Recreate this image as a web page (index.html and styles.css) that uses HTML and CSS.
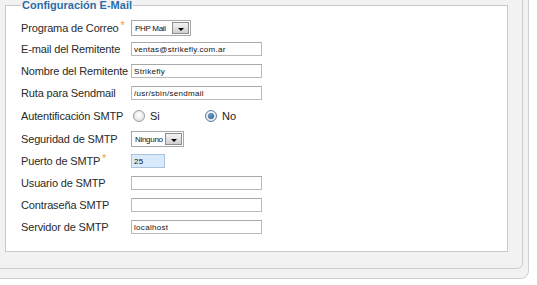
FILE: index.html
```html
<!DOCTYPE html>
<html lang="es">
<head>
  <meta charset="UTF-8" />
  <title>Configuración E-Mail</title>
  <link rel="stylesheet" href="styles.css">
</head>
<body>

<div class="marco">
  <div class="marco-in">
    <fieldset class="config">
      <legend>Configuración E-Mail</legend>

      <div class="fila primera">
        <label>Programa de Correo <span class="req">*</span></label>
        <div class="combo ancho-php">
          <span class="combo-txt">PHP Mail</span>
          <span class="combo-btn"><i></i></span>
        </div>
      </div>

      <div class="fila">
        <label>E-mail del Remitente</label>
        <input type="text" value="ventas@strikefly.com.ar">
      </div>

      <div class="fila">
        <label>Nombre del Remitente</label>
        <input type="text" value="Strikefly">
      </div>

      <div class="fila">
        <label>Ruta para Sendmail</label>
        <input type="text" value="/usr/sbin/sendmail">
      </div>

      <div class="fila radios">
        <label>Autentificación SMTP</label>
        <span class="opcion si"><span class="radio"></span>Si</span>
        <span class="opcion"><span class="radio activo"></span>No</span>
      </div>

      <div class="fila">
        <label>Seguridad de SMTP</label>
        <div class="combo ancho-ninguno">
          <span class="combo-txt">Ninguno</span>
          <span class="combo-btn"><i></i></span>
        </div>
      </div>

      <div class="fila">
        <label>Puerto de SMTP <span class="req">*</span></label>
        <input type="text" class="corto foco" value="25">
      </div>

      <div class="fila">
        <label>Usuario de SMTP</label>
        <input type="text" value="">
      </div>

      <div class="fila">
        <label>Contraseña SMTP</label>
        <input type="password" value="">
      </div>

      <div class="fila">
        <label>Servidor de SMTP</label>
        <input type="text" value="localhost">
      </div>
    </fieldset>
  </div>
</div>

</body>
</html>
```

FILE: styles.css
```css
* {
  box-sizing: border-box;
}
body {
  margin: 0;
  background: #fff;
  font-family: 'Liberation Sans', Arial, sans-serif;
  color: #222;
  overflow: hidden;
}
.marco {
  margin: -10px 0 0 -10px;
  width: 539px;
  background: #f2f2f2;
  border: 1px solid #cfcfcf;
  border-radius: 0 0 8px 0;
  padding: 0 5px 9px 0;
}
.marco-in {
  border: 1px solid #cdcdcd;
  border-radius: 0 0 6px 0;
  padding: 7px 14px 16px 13px;
}
.config {
  margin: 0;
  background: #fff;
  border: 1px solid #c9c9c9;
  padding: 7px 10px 13px 15px;
}
.config legend {
  padding: 0 1px;
  font-size: 11px;
  line-height: 12px;
  font-weight: bold;
  color: #2a6ca8;
}
.fila {
  display: flex;
  align-items: center;
  height: 22px;
}
.fila.primera {
  height: 20px;
}
.fila.radios {
  height: 24px;
}
.fila label {
  width: 110px;
  flex-shrink: 0;
  font-size: 11px;
  letter-spacing: -0.15px;
  color: #2a2a2a;
  white-space: nowrap;
}
.req {
  color: #f0a23a;
  font-size: 11px;
  margin-left: -1px;
  position: relative;
  top: -3px;
}
.fila input {
  width: 131px;
  height: 14px;
  border: 1px solid #b9b9b9;
  border-top-color: #a9a9a9;
  padding: 0 2px;
  font-family: 'Liberation Sans', Arial, sans-serif;
  font-size: 8px;
  letter-spacing: 0.3px;
  color: #111;
  background: #fff;
  outline: none;
}
.fila input.corto {
  width: 34px;
}
.fila input.foco {
  background: #d9ebfb;
  border-color: #a9c3dc;
}
.combo {
  display: flex;
  align-items: center;
  height: 16px;
  border: 1px solid #a7a7a7;
  background: #fff;
  padding: 0 1px 0 3px;
}
.ancho-php { width: 60px; }
.ancho-ninguno { width: 53px; }
.combo-txt {
  flex: 1;
  font-size: 8px;
  letter-spacing: -0.3px;
  color: #111;
  white-space: nowrap;
}
.combo-btn {
  width: 17px;
  height: 12px;
  border: 1px solid #8d8d8d;
  background: linear-gradient(#f4f4f4, #cfcfcf);
  position: relative;
}
.combo-btn i {
  position: absolute;
  left: 5px;
  top: 5px;
  border-left: 3px solid transparent;
  border-right: 3px solid transparent;
  border-top: 3px solid #000;
}
.opcion {
  display: flex;
  align-items: center;
  font-size: 11px;
  color: #222;
}
.opcion.si {
  width: 72px;
}
.radio {
  width: 12px;
  height: 12px;
  border-radius: 50%;
  border: 1px solid #9a9a9a;
  background: radial-gradient(circle at 50% 40%, #ffffff, #dcdcdc);
  margin: 0 5px 0 2px;
  position: relative;
}
.radio.activo {
  border-color: #5a7fa3;
}
.radio.activo::after {
  content: "";
  position: absolute;
  left: 2px;
  top: 2px;
  width: 6px;
  height: 6px;
  border-radius: 50%;
  background: radial-gradient(circle at 40% 35%, #6fa0d0, #1f4f80);
}
```
